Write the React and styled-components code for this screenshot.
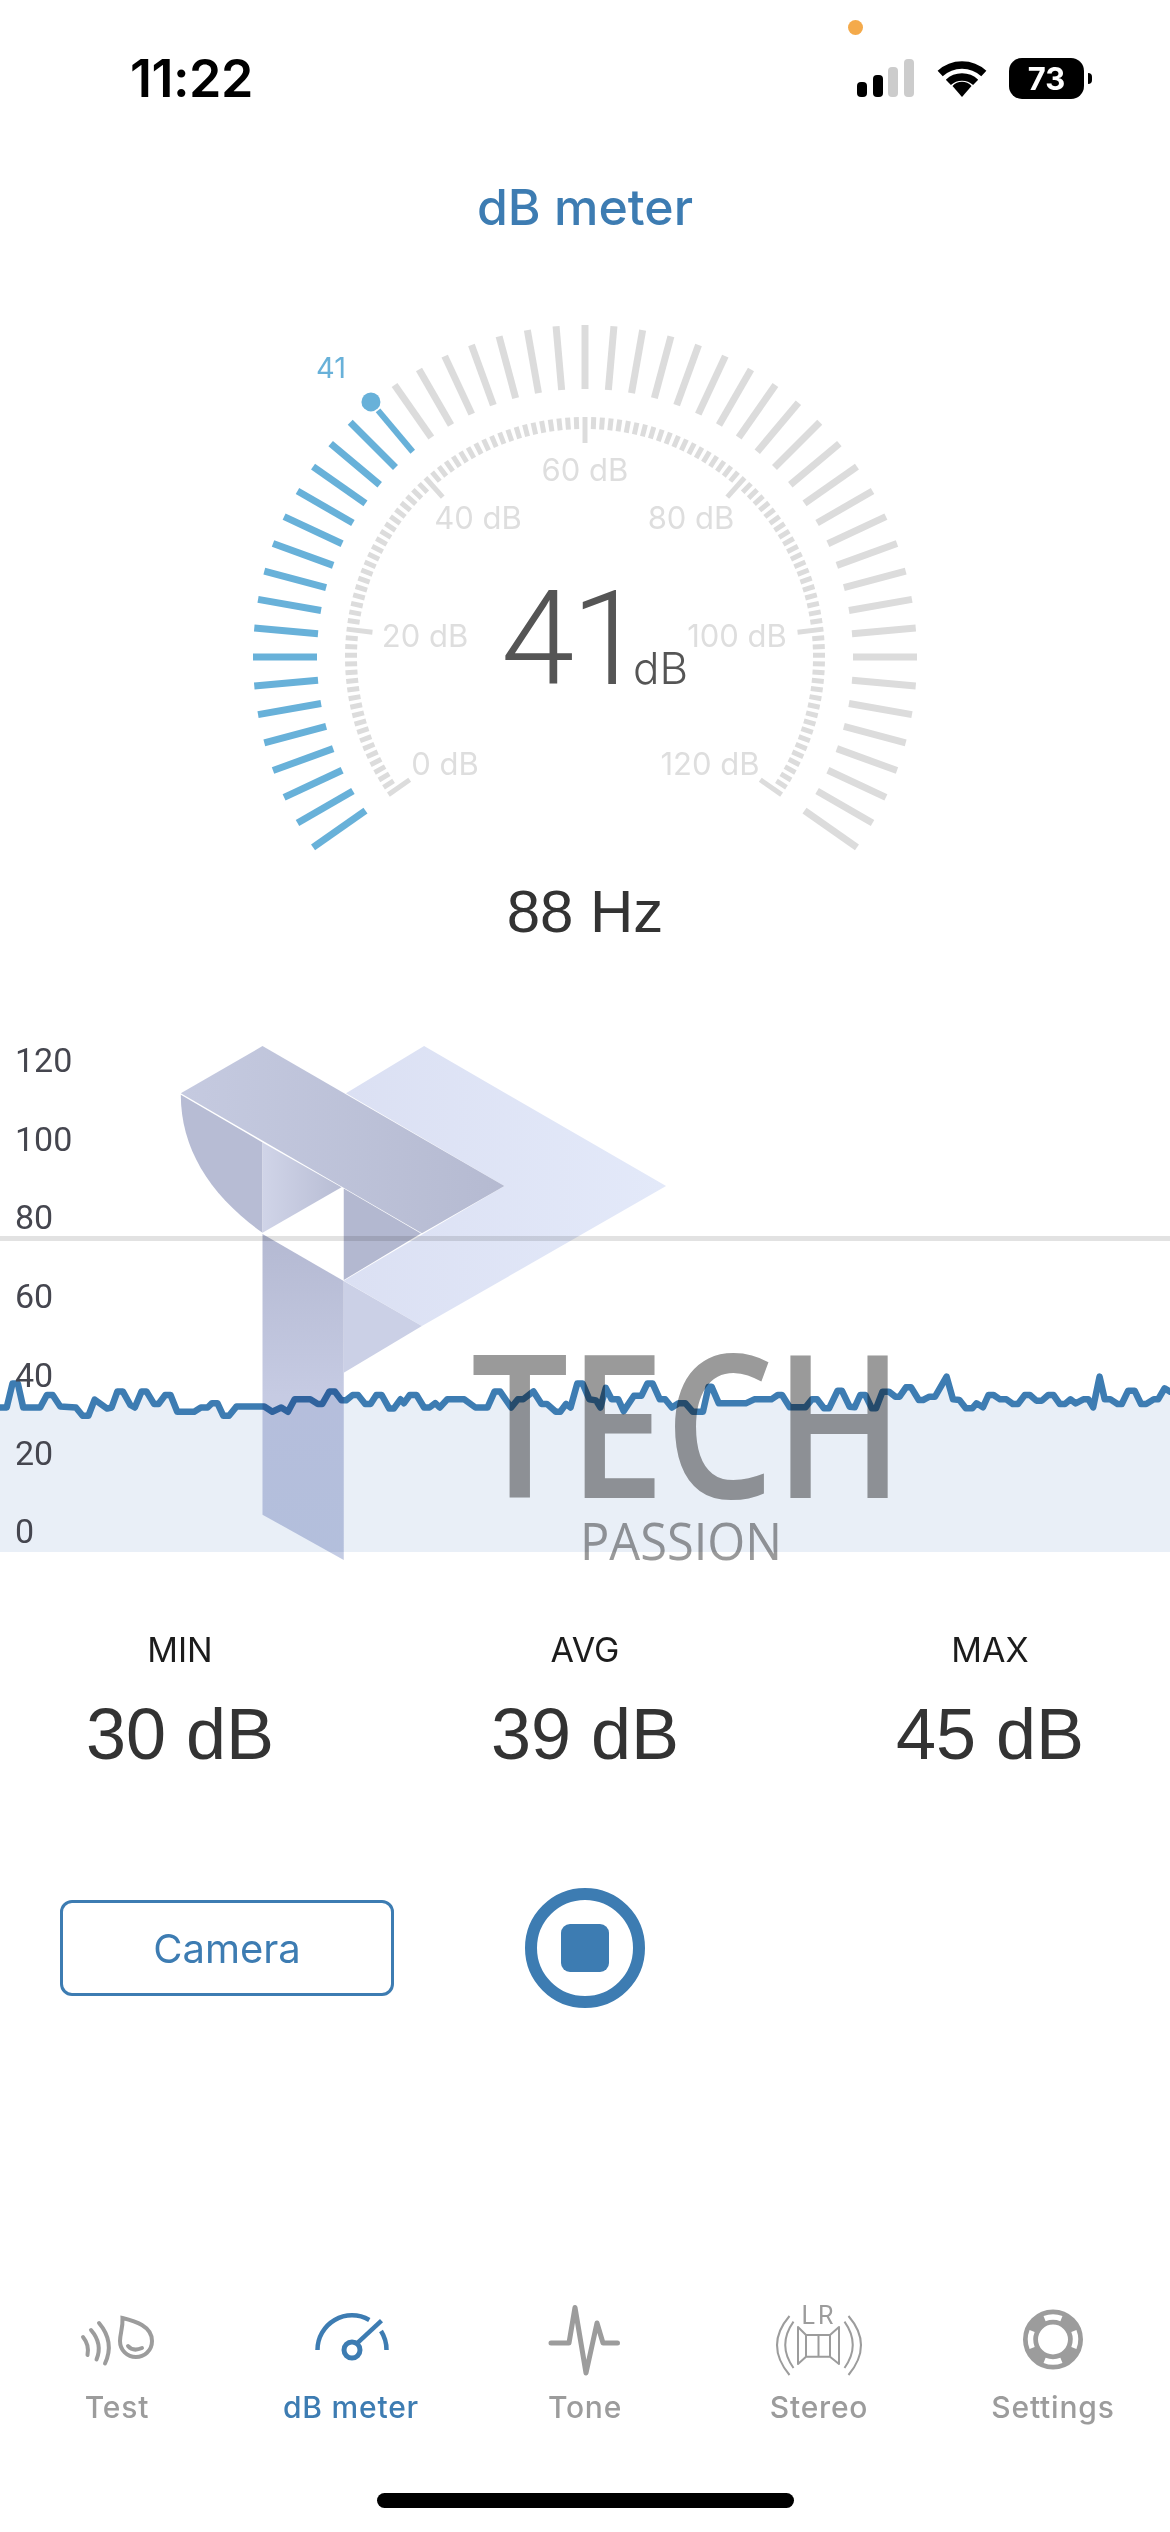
import React from 'react';
import styled, { createGlobalStyle } from 'styled-components';

const BLUE = '#3d7cb2';
const SKY = '#68b1d9';
const TICK = '#dcdcdc';
const GREY = '#9c9c9c';

const Global = createGlobalStyle`
  html, body { margin: 0; padding: 0; background: #fff; }
  #root { width: 1170px; height: 2532px; overflow: hidden; }
`;

const Page = styled.div`
  width: 1170px;
  height: 2532px;
  position: relative;
  display: flex;
  flex-direction: column;
  background: #fff;
  font-family: Inter, "Liberation Sans", sans-serif;
  overflow: hidden;
`;

const StatusBar = styled.header`
  height: 156px;
  flex: none;
  display: flex;
  align-items: center;
  justify-content: space-between;
  padding: 0 86px 0 130px;
  box-sizing: border-box;
`;
const Clock = styled.div`
  font-size: 52px;
  font-weight: 600;
  letter-spacing: -0.5px;
  color: #000;
`;
const StatusIcons = styled.div`
  display: flex;
  align-items: center;
  gap: 22px;
`;
const PrivacyDot = styled.span`
  position: absolute;
  left: 848px;
  top: 20px;
  width: 15px;
  height: 15px;
  border-radius: 50%;
  background: #f4aa4b;
`;
const Battery = styled.div`
  position: relative;
  width: 75px;
  height: 41px;
  border-radius: 13px;
  background: #000;
  color: #fff;
  font-size: 31px;
  font-weight: 700;
  display: flex;
  align-items: center;
  justify-content: center;
  &::after {
    content: '';
    position: absolute;
    right: -8px;
    top: 15px;
    width: 4px;
    height: 11px;
    border-radius: 0 6px 6px 0;
    background: #000;
  }
`;
const Title = styled.h1`
  margin: 0;
  height: 108px;
  flex: none;
  line-height: 102px;
  text-align: center;
  font-size: 50px;
  font-weight: 500;
  color: ${BLUE};
`;
const GaugeSvg = styled.svg`
  display: block;
  flex: none;
  width: 740px;
  height: 600px;
  margin: 0 auto;
`;
const GaugeLabel = styled.text`
  font-family: Inter, sans-serif;
  font-size: 31px;
  fill: #dedede;
  text-anchor: middle;
`;
const Reading = styled.text`
  font-family: ${p => p.$family};
  font-weight: 300;
  fill: #555;
`;
const Frequency = styled.div`
  flex: none;
  height: 80px;
  margin-top: 8px;
  line-height: 80px;
  text-align: center;
  font-family: "Liberation Sans", sans-serif;
  font-size: 60px;
  color: #333;
`;
const ChartPanel = styled.section`
  position: relative;
  flex: none;
  height: 540px;
  margin-top: 78px;
`;
const ChartSvg = styled.svg`
  display: block;
  width: 1170px;
  height: 540px;
`;
const AxisLabel = styled.text`
  font-family: Roboto, sans-serif;
  font-size: 34px;
  fill: #45464f;
`;
const Watermark = styled.svg`
  position: absolute;
  left: 0;
  top: 0;
  width: 1170px;
  height: 600px;
  mix-blend-mode: multiply;
  pointer-events: none;
  filter: blur(0.6px);
`;
const MarkText = styled.text`
  font-family: "Open Sans", sans-serif;
  font-size: ${p => p.$size}px;
  font-weight: ${p => p.$weight};
  fill: #9a9a9a;
`;
const Stats = styled.section`
  flex: none;
  margin-top: 60px;
  padding: 0 45px;
  display: grid;
  grid-template-columns: repeat(3, 270px);
  justify-content: space-between;
`;
const Stat = styled.div`
  display: flex;
  flex-direction: column;
  align-items: center;
`;
const StatLabel = styled.div`
  font-family: Inter, sans-serif;
  font-size: 34px;
  line-height: 40px;
  color: #1c1c1c;
`;
const StatValue = styled.div`
  font-family: "Liberation Sans", sans-serif;
  font-size: 72px;
  line-height: 80px;
  margin-top: 24px;
  color: #333;
`;
const Controls = styled.section`
  flex: none;
  margin-top: 114px;
  padding: 0 60px;
  display: grid;
  grid-template-columns: 1fr 120px 1fr;
  align-items: center;
`;
const CameraButton = styled.button`
  width: 334px;
  height: 96px;
  box-sizing: border-box;
  border: 3px solid ${BLUE};
  border-radius: 12px;
  background: #fff;
  color: ${BLUE};
  font-family: Inter, sans-serif;
  font-size: 40px;
  padding: 0;
`;
const RecordButton = styled.button`
  width: 120px;
  height: 120px;
  box-sizing: border-box;
  border: 12px solid ${BLUE};
  border-radius: 50%;
  background: #fff;
  padding: 0;
  display: flex;
  align-items: center;
  justify-content: center;
`;
const StopSquare = styled.span`
  width: 48px;
  height: 48px;
  border-radius: 9px;
  background: ${BLUE};
`;
const TabBar = styled.nav`
  position: absolute;
  left: 0;
  right: 0;
  top: 2305px;
  display: flex;
`;
const Tab = styled.div`
  flex: 1;
  display: flex;
  flex-direction: column;
  align-items: center;
  color: ${p => (p.$active ? BLUE : GREY)};
`;
const TabIcon = styled.svg`
  display: block;
  width: 96px;
  height: 72px;
  overflow: visible;
`;
const TabLabel = styled.div`
  margin-top: 12px;
  font-family: Inter, sans-serif;
  font-size: 30px;
  font-weight: 500;
  letter-spacing: 0.8px;
  line-height: 36px;
`;
const HomeIndicator = styled.div`
  position: absolute;
  left: 377px;
  top: 2493px;
  width: 417px;
  height: 15px;
  border-radius: 8px;
  background: #000;
`;

const polar = (theta, r, cx = 585, cy = 657) => {
  const t = (theta * Math.PI) / 180;
  return [cx - r * Math.cos(t), cy - r * Math.sin(t)];
};
const Spoke = ({ theta, r1, r2, w, c }) => {
  const [x1, y1] = polar(theta, r1);
  const [x2, y2] = polar(theta, r2);
  return <line x1={x1} y1={y1} x2={x2} y2={y2} stroke={c} strokeWidth={w} />;
};

const Gauge = () => {
  const needle = polar(50, 333);
  return (
    <GaugeSvg viewBox="215 264 740 600">
      {Array.from({ length: 51 }, (_, i) => (
        <Spoke key={i} theta={-35 + i * 5} r1={268} r2={i === 17 ? 322 : 332} w={i === 17 ? 6 : 7} c={i <= 17 ? SKY : TICK} />
      ))}
      <circle cx={needle[0]} cy={needle[1]} r="9.5" fill={SKY} />
      {Array.from({ length: 121 }, (_, j) => (
        <Spoke key={j} theta={-35 + (j * 250) / 120} r1={j % 20 === 0 ? 214 : 228} r2={240} w={5} c={TICK} />
      ))}
      {[
        ['0 dB', 445, 775],
        ['20 dB', 425, 647],
        ['40 dB', 478, 529],
        ['60 dB', 585, 481],
        ['80 dB', 691, 529],
        ['100 dB', 737, 647],
        ['120 dB', 710, 775],
      ].map(([t, x, y]) => (
        <GaugeLabel key={t} x={x} y={y}>{t}</GaugeLabel>
      ))}
      <text x="331" y="378" fontFamily="Inter, sans-serif" fontSize="29" fill={SKY} textAnchor="middle">41</text>
      <Reading $family="Roboto, sans-serif" x="501" y="684" fontSize="132" letterSpacing="-3">41</Reading>
      <Reading $family="Inter, sans-serif" x="633" y="684" fontSize="44">dB</Reading>
    </GaugeSvg>
  );
};

const z3 = [[0,1085],[15,1085],[28,1018],[40,1018],[52,1085],[90,1085],[105,1050],[118,1050],[135,1082],[170,1085],[185,1108],[198,1108],[212,1063],[240,1088],[250,1085],[263,1040],[275,1040],[292,1078],[302,1085],[317,1040],[328,1040],[345,1075],[355,1075],[370,1050],[382,1050],[397,1097],[435,1097],[450,1085],[465,1085],[475,1073],[487,1073],[500,1108],[513,1108],[530,1082],[592,1082],[610,1097],[630,1085],[645,1097],[660,1062],[695,1062],[712,1075],[722,1075],[738,1040],[750,1040],[765,1065],[775,1065],[790,1050],[802,1050],[818,1075],[830,1075],[843,1050],[855,1050],[872,1088],[882,1088],[897,1062],[905,1073],[918,1050],[933,1050],[950,1085],[962,1085],[975,1073],[985,1085],[1002,1062],[1040,1062],[1065,1085],[1092,1085],[1108,1040],[1120,1040],[1145,1085],[1160,1062],[1172,1062],[1195,1040],[1213,1075],[1225,1075],[1245,1097],[1255,1097],[1268,1075],[1278,1085],[1293,1018],[1305,1018],[1320,1062],[1335,1065],[1345,1085],[1357,1030],[1370,1062],[1385,1062],[1397,1095],[1420,1052],[1437,1052],[1450,1018],[1462,1018],[1478,1062],[1490,1062],[1505,1085],[1520,1073],[1535,1073],[1552,1097]];
const z4 = [[460,635],[475,635],[488,560],[495,560],[512,610],[575,610],[595,598],[635,598],[650,585],[660,585],[678,622],[715,622],[730,598],[742,598],[758,625],[770,625],[790,572],[800,572],[818,620],[830,622],[843,585],[855,585],[870,625],[880,625],[895,575],[910,575],[925,590],[935,590],[950,562],[962,562],[980,600],[990,600],[1005,590],[1018,590],[1045,530],[1060,598],[1075,600],[1090,625],[1105,625],[1115,610],[1130,622],[1143,585],[1155,585],[1170,598],[1185,598],[1200,612],[1212,612],[1228,585],[1240,585],[1255,602],[1268,602],[1283,585],[1295,585],[1310,612],[1322,612],[1335,598],[1347,610],[1365,598],[1377,598],[1388,622],[1403,530],[1415,598],[1428,598],[1445,612],[1455,612],[1470,572],[1485,572],[1500,612],[1512,612],[1530,598],[1540,598],[1555,565],[1568,575]];
const series = [
  ...z3.map(([x, y]) => [x / 2.24, y / 2.8 + 1020]),
  ...z4.map(([x, y]) => [x / 2.34 + 500, y / 3 + 1200]),
];
const linePts = series.map(p => p.join(',')).join(' ');
const areaPts = `0,1552 ${linePts} 1170,1552`;

const mark = pts => pts.map(([x, y]) => `${x / 2.24},${y / 2.8 + 1020}`).join(' ');
const mx = x => x / 2.24;
const my = y => y / 2.8 + 1020;

const LogoMark = () => (
  <Watermark viewBox="0 1030 1170 600">
    <defs>
      <linearGradient id="bandTop" x1="0" x2="1" y1="0" y2="0">
        <stop offset="0" stopColor="#c5cae0" />
        <stop offset="1" stopColor="#b5bad1" />
      </linearGradient>
      <linearGradient id="inner" x1="0" x2="1" y1="0" y2="0">
        <stop offset="0" stopColor="#d0d4e8" />
        <stop offset="1" stopColor="#b8bdd4" />
      </linearGradient>
      <linearGradient id="stem" x1="0" x2="0" y1="0" y2="1">
        <stop offset="0" stopColor="#b4b9d2" />
        <stop offset="0.5" stopColor="#c6cbe3" />
        <stop offset="1" stopColor="#c4cce4" />
      </linearGradient>
      <linearGradient id="wing" x1="0" x2="1" y1="0" y2="0">
        <stop offset="0" stopColor="#dbe0f3" />
        <stop offset="1" stopColor="#e3e9f9" />
      </linearGradient>
    </defs>
    <polygon fill="url(#wing)" points={mark([[775,205],[950,73],[1492,465],[945,857],[770,730],[1130,465]])} />
    <polygon fill="url(#bandTop)" points={mark([[405,205],[588,73],[1130,465],[945,597]])} />
    <path fill="#b7bcd4" d={`M${mx(405)} ${my(209)} L${mx(588)} ${my(343)} V${my(596)} C${mx(470)} ${my(490)} ${mx(405)} ${my(360)} ${mx(405)} ${my(209)}Z`} />
    <polygon fill="url(#inner)" points={mark([[588,343],[765,468],[588,596]])} />
    <polygon fill="#b3b8d0" points={mark([[770,472],[943,598],[770,728]])} />
    <polygon fill="url(#stem)" points={mark([[588,599],[770,731],[770,1512],[588,1385]])} />
    <polygon fill="#cbd0e6" points={mark([[770,731],[945,857],[770,988]])} />
    <MarkText x="471" y="1498" $size={200} $weight={600} textLength="433" lengthAdjust="spacingAndGlyphs">TECH</MarkText>
    <MarkText x="580" y="1560" $size={52} $weight={400} textLength="202" lengthAdjust="spacingAndGlyphs">PASSION</MarkText>
  </Watermark>
);

const Chart = () => (
  <ChartPanel>
    <ChartSvg viewBox="0 1030 1170 540">
      <rect x="0" y="1236" width="1170" height="5" fill="#e2e2e2" />
      <polygon points={areaPts} fill="#e9eff7" />
      <polyline points={linePts} fill="none" stroke={BLUE} strokeWidth="6.5" strokeLinejoin="round" strokeLinecap="round" />
      {[['120', 1072], ['100', 1151], ['80', 1229], ['60', 1307.5], ['40', 1387], ['20', 1465], ['0', 1543]].map(([t, y]) => (
        <AxisLabel key={t} x="15" y={y}>{t}</AxisLabel>
      ))}
    </ChartSvg>
    <LogoMark />
  </ChartPanel>
);

const TestIcon = () => (
  <TabIcon viewBox="-8 -9 96 72" fill="none" stroke="currentColor" strokeWidth="4" strokeLinecap="round">
    <path d="M6 23Q12.5 31 10.5 41" />
    <path d="M14 16Q26 30 19.5 45.5" />
    <path d="M22 9Q38 28 28 49.5" />
    <path d="M45.5 4C58 7 75 12 75 27C75 37 67 43 59 43C50 43 43 36 43 27C43 20 46 14 45.5 4Z" />
    <path d="M51 32Q56 38 65 34" />
  </TabIcon>
);
const MeterIcon = () => (
  <TabIcon viewBox="-8 -5 96 72" fill="none" stroke="currentColor" strokeWidth="4.5">
    <path d="M6.5 40A34.5 34.5 0 0 1 58.3 10" />
    <path d="M70 21A34.5 34.5 0 0 1 75.5 40" />
    <path d="M46.8 32.7L70.5 10.7" />
    <circle cx="41" cy="40" r="8" strokeWidth="5" />
  </TabIcon>
);
const ToneIcon = () => (
  <TabIcon viewBox="-8 0 96 72" fill="none" stroke="currentColor" strokeWidth="5" strokeLinecap="round" strokeLinejoin="round">
    <path d="M6 38H24L30 2.5L41 68L52 18L58 38H72.5" />
  </TabIcon>
);
const StereoIcon = () => (
  <TabIcon viewBox="0 0 96 72" fill="none" stroke="currentColor" strokeWidth="2">
    <text x="48" y="18.5" textAnchor="middle" fontFamily="Roboto, sans-serif" fontSize="25" letterSpacing="3" fill="currentColor" stroke="none">LR</text>
    <path d="M27 22L35 30H59L68 22V59L59 51.7H35L27 59Z" strokeLinejoin="round" />
    <path d="M35 30V51.7M47.5 30V51.7M59 30V51.7" />
    <path d="M18.5 11Q-6.5 40 18.5 70M22.5 16.7Q6 40 22.5 63" />
    <path d="M77.5 11Q102.5 40 77.5 70M73.5 16.7Q90 40 73.5 63" />
  </TabIcon>
);
const buoyArc = (deg) => {
  const a = ((deg - 22) * Math.PI) / 180;
  const b = ((deg + 22) * Math.PI) / 180;
  const r = 22.5;
  return `M${48 + r * Math.sin(a)} ${34.5 - r * Math.cos(a)}A${r} ${r} 0 0 1 ${48 + r * Math.sin(b)} ${34.5 - r * Math.cos(b)}`;
};
const BuoyIcon = () => (
  <TabIcon viewBox="0 0 96 72" fill="none">
    <circle cx="48" cy="34.5" r="22.5" stroke="currentColor" strokeWidth="15" />
    {[0, 90, 180, 270].map(d => (
      <path key={d} d={buoyArc(d)} stroke="#fff" strokeWidth="5.5" />
    ))}
  </TabIcon>
);

const TABS = [
  ['Test', TestIcon],
  ['dB meter', MeterIcon],
  ['Tone', ToneIcon],
  ['Stereo', StereoIcon],
  ['Settings', BuoyIcon],
];

const wedge = (r) => {
  const s = Math.sin((43 * Math.PI) / 180) * r;
  const c = Math.cos((43 * Math.PI) / 180) * r;
  return `M${25 - s} ${38 - c}A${r} ${r} 0 0 1 ${25 + s} ${38 - c}`;
};

export default function App() {
  return (
    <Page>
      <Global />
      <PrivacyDot />
      <StatusBar>
        <Clock>11:22</Clock>
        <StatusIcons>
          <svg width="58" height="38" viewBox="0 0 58 38">
            <rect x="0" y="23" width="10" height="15" rx="4" fill="#000" />
            <rect x="16" y="16" width="10" height="22" rx="4" fill="#000" />
            <rect x="31" y="8" width="10" height="30" rx="4" fill="#ccc" />
            <rect x="47" y="0" width="10" height="38" rx="4" fill="#ccc" />
          </svg>
          <svg width="50" height="38" viewBox="0 0 50 38" fill="none" stroke="#000" strokeWidth="7.5">
            <path d={wedge(32)} />
            <path d={wedge(20)} />
            <path d="M25 38L15.5 27A13 13 0 0 1 34.5 27Z" fill="#000" stroke="none" />
          </svg>
          <Battery>73</Battery>
        </StatusIcons>
      </StatusBar>
      <Title>dB meter</Title>
      <Gauge />
      <Frequency>88 Hz</Frequency>
      <Chart />
      <Stats>
        {[['MIN', '30 dB'], ['AVG', '39 dB'], ['MAX', '45 dB']].map(([l, v]) => (
          <Stat key={l}>
            <StatLabel>{l}</StatLabel>
            <StatValue>{v}</StatValue>
          </Stat>
        ))}
      </Stats>
      <Controls>
        <CameraButton>Camera</CameraButton>
        <RecordButton><StopSquare /></RecordButton>
      </Controls>
      <TabBar>
        {TABS.map(([label, Icon]) => (
          <Tab key={label} $active={label === 'dB meter'}>
            <Icon />
            <TabLabel>{label}</TabLabel>
          </Tab>
        ))}
      </TabBar>
      <HomeIndicator />
    </Page>
  );
}
